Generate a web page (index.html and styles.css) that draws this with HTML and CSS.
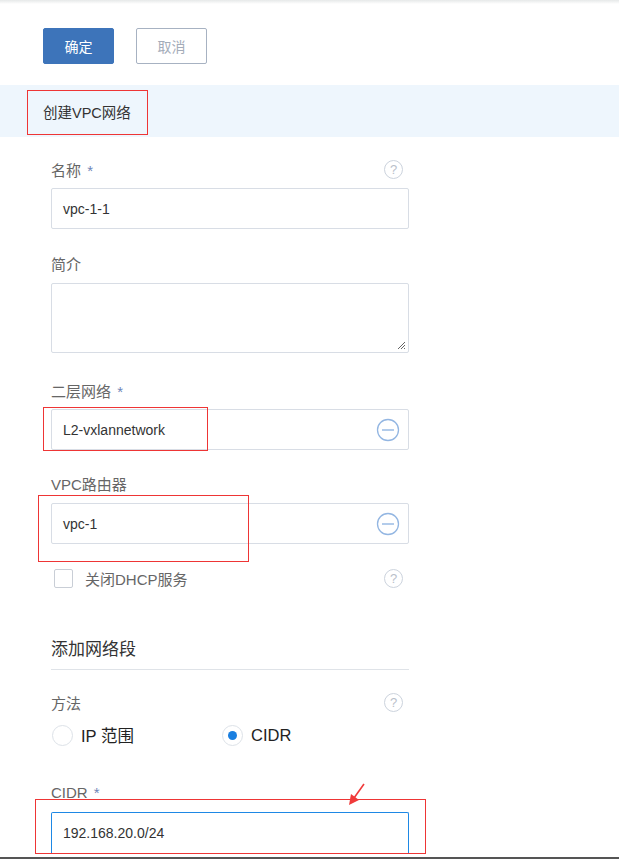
FILE: index.html
```html
<!DOCTYPE html>
<html lang="zh">
<head>
<meta charset="utf-8">
<link rel="stylesheet" href="styles.css">
</head>
<body>
<div class="page">
  <div class="topshade"></div>
  <div class="actions">
    <button class="btn btn-primary">确定</button>
    <button class="btn btn-cancel">取消</button>
  </div>
  <div class="band">
    <span class="band-title">创建VPC网络</span>
    <div class="mark mark-title"></div>
  </div>
  <form class="form">
    <div class="label-row row-name">
      <span class="label">名称 <span class="req">*</span></span>
      <span class="help">?</span>
    </div>
    <div class="input">vpc-1-1</div>

    <div class="label-row row-desc">
      <span class="label">简介</span>
    </div>
    <div class="textarea">
      <svg class="grip" width="9" height="9" viewBox="0 0 9 9"><path d="M8 1L1 8M8 4L4 8M8 7L7 8" stroke="#666" stroke-width="1" fill="none"/></svg>
    </div>

    <div class="label-row row-l2">
      <span class="label">二层网络 <span class="req">*</span></span>
    </div>
    <div class="input input-select">
      <span>L2-vxlannetwork</span>
      <svg class="minus" width="24" height="24" viewBox="0 0 24 24"><circle cx="12" cy="12" r="10.5" fill="none" stroke="#93b6e2" stroke-width="1.3"/><path d="M6 12H18" stroke="#93b6e2" stroke-width="1.4"/></svg>
      <div class="mark mark-l2"></div>
    </div>

    <div class="label-row row-vpc">
      <span class="label">VPC路由器</span>
    </div>
    <div class="input input-select">
      <span>vpc-1</span>
      <svg class="minus" width="24" height="24" viewBox="0 0 24 24"><circle cx="12" cy="12" r="10.5" fill="none" stroke="#93b6e2" stroke-width="1.3"/><path d="M6 12H18" stroke="#93b6e2" stroke-width="1.4"/></svg>
      <div class="mark mark-vpc"></div>
    </div>

    <div class="check-row">
      <span class="check-left"><span class="checkbox"></span><span class="check-label">关闭DHCP服务</span></span>
      <span class="help">?</span>
    </div>

    <div class="section-title">添加网络段</div>

    <div class="label-row row-method">
      <span class="label">方法</span>
      <span class="help">?</span>
    </div>
    <div class="radios">
      <span class="radio-item"><span class="radio"></span><span class="radio-label">IP 范围</span></span>
      <span class="radio-item"><span class="radio radio-on"></span><span class="radio-label">CIDR</span></span>
    </div>

    <div class="label-row row-cidr">
      <span class="label">CIDR <span class="req">*</span></span>
    </div>
    <div class="input input-focus">192.168.20.0/24
      <div class="mark mark-cidr"></div>
      <svg class="arrow" width="20" height="26" viewBox="0 0 20 26"><path d="M16 1 L6 15" stroke="#f03a3a" stroke-width="1.6" fill="none"/><path d="M1 22 L3 11 L11 17 Z" fill="#f03a3a"/></svg>
    </div>
  </form>
  <div class="bottomline"></div>
</div>
</body>
</html>
```
FILE: styles.css
```css
html, body {
  margin: 0;
  padding: 0;
  background: #fff;
}
.page {
  position: relative;
  width: 619px;
  height: 859px;
  overflow: hidden;
  font-family: "Liberation Sans", "Noto Sans CJK SC", sans-serif;
  color: #333;
}
.topshade {
  height: 4px;
  background: linear-gradient(#e6e9e9, #fff);
}
.actions {
  display: flex;
  gap: 22px;
  padding: 24px 0 0 43px;
}
.btn {
  width: 71px;
  height: 36px;
  border-radius: 2px;
  font-family: "Liberation Sans", "Noto Sans CJK SC", sans-serif;
  font-size: 14px;
  padding: 0;
  box-sizing: border-box;
}
.btn-primary {
  background: #3d74ba;
  border: 1px solid #3d74ba;
  color: #fff;
}
.btn-cancel {
  background: #fff;
  border: 1px solid #a7b2c2;
  color: #a4acb9;
}
.band {
  position: relative;
  margin-top: 21px;
  height: 52px;
  background: #eef6fd;
  display: flex;
  align-items: center;
  padding-left: 43px;
}
.band-title {
  font-size: 14.5px;
  color: #333;
  margin-top: 1px;
}
.mark {
  position: absolute;
  border: 1px solid #ee3535;
  pointer-events: none;
}
.mark-title {
  left: 27px;
  top: 5px;
  width: 119px;
  height: 43px;
}
.form {
  width: 358px;
  margin-left: 51px;
  display: flex;
  flex-direction: column;
}
.label-row {
  display: flex;
  justify-content: space-between;
  align-items: center;
  height: 20px;
}
.label {
  font-size: 15px;
  color: #666;
}
.req {
  color: #6f86b8;
  margin-left: 2px;
}
.help {
  width: 17px;
  height: 17px;
  border: 1px solid #ccd3dd;
  border-radius: 50%;
  color: #b9c0ca;
  font-size: 13px;
  line-height: 17px;
  text-align: center;
  margin-right: 6px;
  font-family: "Liberation Sans", sans-serif;
}
.row-name { margin-top: 22px; }
.row-desc { margin-top: 24px; }
.row-l2 { margin-top: 27px; }
.row-vpc { margin-top: 23px; }
.row-method { margin-top: 22px; }
.row-cidr { margin-top: 36px; }
.input {
  position: relative;
  box-sizing: border-box;
  height: 41px;
  border: 1px solid #d8dde5;
  border-radius: 2px;
  padding-left: 11px;
  display: flex;
  align-items: center;
  font-size: 14px;
  color: #333;
  margin-top: 9px;
}
.row-l2 + .input { margin-top: 9px; }
.row-vpc + .input { margin-top: 10px; }
.input-select {
  justify-content: space-between;
  padding-right: 8px;
}
.minus {
  display: block;
}
.textarea {
  position: relative;
  box-sizing: border-box;
  height: 70px;
  border: 1px solid #d8dde5;
  border-radius: 2px;
  margin-top: 10px;
}
.grip {
  position: absolute;
  right: 2px;
  bottom: 2px;
}
.mark-l2 {
  left: -9px;
  top: -3px;
  width: 163px;
  height: 42px;
}
.mark-vpc {
  left: -14px;
  top: -9px;
  width: 209px;
  height: 65px;
}
.check-row {
  display: flex;
  justify-content: space-between;
  align-items: center;
  margin-top: 24px;
  height: 21px;
}
.check-left {
  display: flex;
  align-items: center;
}
.checkbox {
  width: 17px;
  height: 17px;
  border: 1px solid #c9ced6;
  border-radius: 2px;
  margin-left: 3px;
}
.check-label {
  font-size: 15px;
  color: #666;
  margin-left: 12px;
}
.section-title {
  font-size: 17px;
  color: #333;
  margin-top: 50px;
  height: 22px;
  line-height: 22px;
  padding-bottom: 8px;
  border-bottom: 1px solid #dfe3e8;
}
.radios {
  display: flex;
  margin-top: 12px;
  height: 22px;
  align-items: center;
}
.radio-item {
  display: flex;
  align-items: center;
  width: 170px;
}
.radio-item + .radio-item { width: auto; }
.radio-item:first-child { margin-left: 1px; }
.radio {
  box-sizing: border-box;
  width: 21px;
  height: 21px;
  border: 1px solid #dde2e8;
  border-radius: 50%;
  position: relative;
}
.radio-on::after {
  content: "";
  position: absolute;
  left: 5px;
  top: 5px;
  width: 9px;
  height: 9px;
  border-radius: 50%;
  background: #1a7fe0;
}
.radio-label {
  font-size: 16.5px;
  color: #222;
  margin-left: 8px;
}
.input-focus {
  height: 41px;
  border: 1px solid #1e88e5;
  border-bottom: none;
  border-radius: 2px 2px 0 0;
}
.row-cidr + .input { margin-top: 10px; }
.mark-cidr {
  left: -17px;
  top: -14px;
  width: 389px;
  height: 53px;
}
.arrow {
  position: absolute;
  left: 296px;
  top: -30px;
}
.bottomline {
  position: absolute;
  left: 0;
  right: 0;
  bottom: 0;
  height: 2px;
  background: #555;
}
```
